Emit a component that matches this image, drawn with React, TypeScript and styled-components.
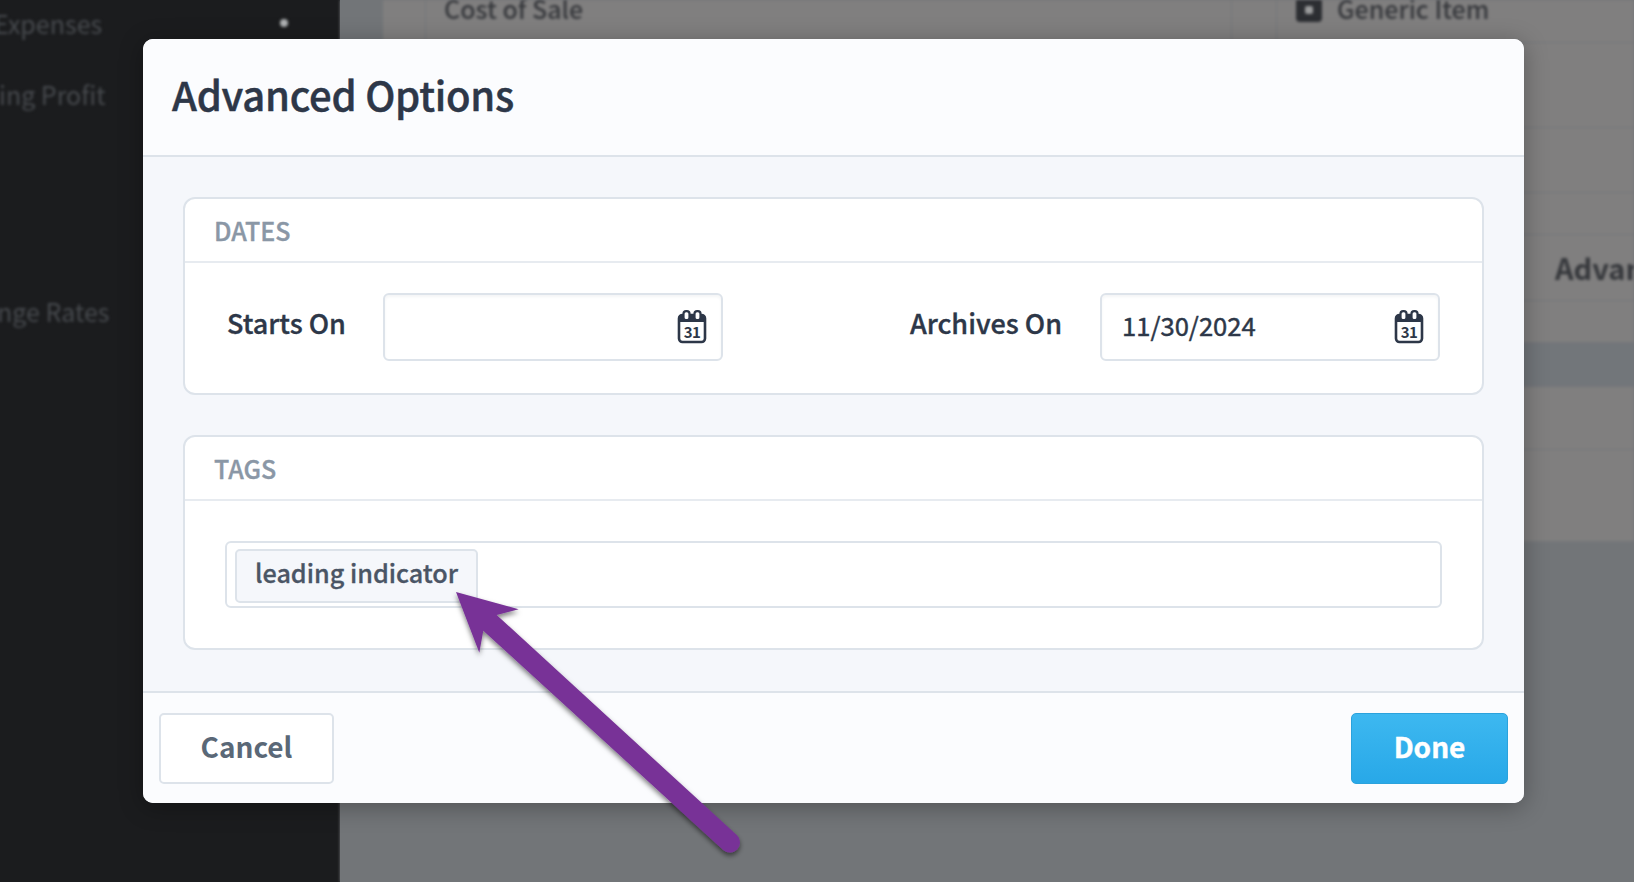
import React from "react";
import styled, { createGlobalStyle } from "styled-components";

const Global = createGlobalStyle`
  html, body { margin: 0; padding: 0; height: 100%; overflow: hidden; }
  body { font-family: "Noto Sans CJK SC", "Noto Sans", sans-serif; background: #727578; }
`;

const Page = styled.div`
  width: 1634px;
  height: 882px;
  position: relative;
  overflow: hidden;
  display: flex;
`;

const Sidebar = styled.aside`
  width: 340px;
  flex: none;
  box-sizing: border-box;
  padding-top: 8px;
  background: #1b1c1e;
  color: #484b4f;
  font-size: 25px;
  line-height: 30px;
  overflow: hidden;
`;

const SideRow = styled.div<{ $gap: number; $shift: number }>`
  display: flex;
  align-items: center;
  margin-top: ${(p) => p.$gap}px;
  margin-left: ${(p) => p.$shift}px;
  padding-right: 52px;
  white-space: nowrap;
  filter: blur(1.4px);
`;

const SideDot = styled.i`
  width: 8px;
  height: 8px;
  margin-left: auto;
  border-radius: 50%;
  background: #b0b2b4;
`;

const Main = styled.main`
  flex: 1;
  display: flex;
  min-width: 0;
  background: #727578;
  filter: blur(1.4px);
`;

const Strip = styled.div`
  width: 43px;
  flex: none;
`;

const Table = styled.div`
  flex: 1;
  min-width: 0;
  height: 542px;
  display: flex;
  flex-direction: column;
  background: #807f7f;
  overflow: hidden;
`;

const Row = styled.div<{ $h: number; $band?: boolean }>`
  height: ${(p) => p.$h}px;
  flex: none;
  box-sizing: border-box;
  display: flex;
  align-items: stretch;
  border-bottom: 1px solid #74767a;
  background: ${(p) => (p.$band ? "#72767a" : "transparent")};
  color: #35373b;
  white-space: nowrap;
`;

const Cell = styled.div<{ $w?: number; $pad?: number; $line?: boolean }>`
  ${(p) => (p.$w ? `width: ${p.$w}px; flex: none;` : "flex: 1;")}
  box-sizing: border-box;
  display: flex;
  align-items: flex-start;
  gap: 15px;
  padding-left: ${(p) => p.$pad ?? 0}px;
  border-left: ${(p) => (p.$line ? "1px solid #74767a" : "none")};
  font-size: 25px;
  font-weight: 500;
  line-height: 30px;
`;

const TopText = styled.span`
  margin-top: -7px;
`;

const AdvancedText = styled.div`
  padding: 14px 0 0 1172px;
  font-size: 29px;
  line-height: 36px;
  font-weight: 700;
`;

const ItemIcon = styled.i`
  width: 26px;
  height: 24px;
  margin-top: -2px;
  border-radius: 4px;
  background: #2c2e32;
  display: flex;
  align-items: center;
  justify-content: center;
  &::after {
    content: "";
    width: 8px;
    height: 8px;
    border-radius: 2px;
    background: #9a9b9c;
  }
`;

const Modal = styled.div`
  position: absolute;
  left: 143px;
  top: 39px;
  width: 1381px;
  height: 764px;
  border-radius: 10px;
  background: #f5f7fb;
  box-shadow: 0 4px 24px rgba(0, 0, 0, 0.3);
  display: flex;
  flex-direction: column;
  overflow: hidden;
  color: #2d3748;
`;

const Header = styled.header`
  height: 118px;
  flex: none;
  box-sizing: border-box;
  background: #fbfcfe;
  border-bottom: 2px solid #dde3ea;
  display: flex;
  align-items: center;
  padding: 0 0 6px 29px;
  font-size: 40px;
  font-weight: 500;
  letter-spacing: -0.25px;
  -webkit-text-stroke: 0.45px #2d3748;
`;

const Body = styled.div`
  flex: 1;
  display: flex;
  flex-direction: column;
  gap: 40px;
  padding: 40px 40px 0;
`;

const Panel = styled.section<{ $h: number }>`
  height: ${(p) => p.$h}px;
  box-sizing: border-box;
  background: #fff;
  border: 2px solid #dde3ea;
  border-radius: 12px;
`;

const PanelTitle = styled.div`
  height: 64px;
  box-sizing: border-box;
  border-bottom: 2px solid #e7ebf0;
  padding: 0 0 0 29px;
  display: flex;
  align-items: center;
  font-size: 25px;
  font-weight: 500;
  color: #8a97a6;
  -webkit-text-stroke: 0.35px #8a97a6;
`;

const DateRow = styled.div`
  display: flex;
  align-items: center;
  padding: 30px 41px 0 41px;
`;

const DateLabel = styled.label<{ $w: number; $end?: boolean }>`
  width: ${(p) => p.$w}px;
  flex: none;
  box-sizing: border-box;
  padding: ${(p) => (p.$end ? "0 39px 9px 0" : "0 0 9px 1px")};
  text-align: ${(p) => (p.$end ? "right" : "left")};
  font-size: 27px;
  font-weight: 500;
  -webkit-text-stroke: 0.35px #2d3748;
`;

const DateInput = styled.div`
  width: 340px;
  height: 68px;
  box-sizing: border-box;
  flex: none;
  margin-left: -1px;
  border: 2px solid #dde3ea;
  border-radius: 6px;
  background: #fff;
  box-shadow: inset 0 2px 3px rgba(45, 55, 72, 0.05);
  padding: 0 14px 0 20px;
  display: flex;
  align-items: center;
  justify-content: space-between;
  font-size: 25.6px;
  -webkit-text-stroke: 0.45px #2d3748;
`;

const DateValue = styled.span`
  margin-bottom: 6px;
`;

const TagField = styled.div`
  margin: 40px 40px 0;
  height: 67px;
  box-sizing: border-box;
  border: 2px solid #dde3ea;
  border-radius: 6px;
  padding: 6px 8px;
`;

const Tag = styled.span`
  display: inline-flex;
  align-items: center;
  height: 54px;
  box-sizing: border-box;
  padding: 0 18px 9px;
  border: 2px solid #dde3ea;
  border-radius: 5px;
  background: #f5f7fb;
  color: #4a5565;
  font-size: 25.2px;
  font-weight: 500;
  -webkit-text-stroke: 0.3px #4a5565;
`;

const Footer = styled.footer`
  height: 112px;
  flex: none;
  box-sizing: border-box;
  background: #fbfcfe;
  border-top: 2px solid #dde3ea;
  padding: 20px 16px 0;
  display: flex;
  justify-content: space-between;
  align-items: flex-start;
`;

const Button = styled.button`
  height: 71px;
  box-sizing: border-box;
  font-family: inherit;
  font-size: 28px;
  font-weight: 700;
  border-radius: 5px;
  padding: 0 0 5px;
`;

const CancelButton = styled(Button)`
  width: 175px;
  background: #fff;
  border: 2px solid #dde3ea;
  color: #5a6877;
`;

const DoneButton = styled(Button)`
  width: 157px;
  background: linear-gradient(#3db8f0, #28a8e8);
  border: 1px solid #2ba2dc;
  color: #fff;
  -webkit-text-stroke: 0.4px #fff;
`;

const Arrow = styled.svg`
  position: absolute;
  left: 0;
  top: 0;
  width: 1634px;
  height: 882px;
  pointer-events: none;
`;

const Calendar = () => (
  <svg width="30" height="34" viewBox="0 0 30 34" fill="none">
    <rect x="2" y="5" width="26" height="27" rx="3.5" stroke="#2d3748" strokeWidth="2.6" />
    <path d="M2 5h26v7H2z" fill="#2d3748" />
    <rect x="6.5" y="1.2" width="6" height="9" rx="2.6" fill="#fff" stroke="#2d3748" strokeWidth="2.2" />
    <rect x="17.5" y="1.2" width="6" height="9" rx="2.6" fill="#fff" stroke="#2d3748" strokeWidth="2.2" />
    <text x="15" y="27.5" textAnchor="middle" fontSize="15" fontWeight="700" letterSpacing="-0.5" fill="#2d3748" stroke="none" fontFamily="'Noto Sans CJK SC', sans-serif">31</text>
  </svg>
);

export default function App() {
  return (
    <Page>
      <Global />
      <Sidebar>
        <SideRow $gap={0} $shift={-6}>Expenses<SideDot /></SideRow>
        <SideRow $gap={41} $shift={-1}>ing Profit</SideRow>
        <SideRow $gap={187} $shift={-3}>nge Rates</SideRow>
      </Sidebar>
      <Main>
        <Strip />
        <Table>
          <Row $h={43}>
            <Cell $w={42} />
            <Cell $w={806} $pad={18} $line><TopText>Cost of Sale</TopText></Cell>
            <Cell $w={45} $line />
            <Cell $pad={19} $line>
              <ItemIcon />
              <TopText>Generic Item</TopText>
            </Cell>
          </Row>
          <Row $h={85} />
          <Row $h={65} />
          <Row $h={42} />
          <Row $h={66}><AdvancedText>Advanced</AdvancedText></Row>
          <Row $h={42} />
          <Row $h={44} $band />
          <Row $h={63} />
          <Row $h={92} />
        </Table>
      </Main>
      <Modal>
        <Header>Advanced Options</Header>
        <Body>
          <Panel $h={198}>
            <PanelTitle>DATES</PanelTitle>
            <DateRow>
              <DateLabel $w={158}>Starts On</DateLabel>
              <DateInput><span /><Calendar /></DateInput>
              <DateLabel $w={378} $end>Archives On</DateLabel>
              <DateInput><DateValue>11/30/2024</DateValue><Calendar /></DateInput>
            </DateRow>
          </Panel>
          <Panel $h={215}>
            <PanelTitle>TAGS</PanelTitle>
            <TagField><Tag>leading indicator</Tag></TagField>
          </Panel>
        </Body>
        <Footer>
          <CancelButton>Cancel</CancelButton>
          <DoneButton>Done</DoneButton>
        </Footer>
      </Modal>
      <Arrow viewBox="0 0 1634 882">
        <defs>
          <filter id="arrowShadow" x="-20%" y="-20%" width="140%" height="140%">
            <feDropShadow dx="0" dy="3" stdDeviation="2.5" floodColor="#000" floodOpacity="0.5" />
          </filter>
        </defs>
        <g filter="url(#arrowShadow)" fill="#783397">
          <path d="M456 592 L518.7 609.3 L496.7 615 L736.8 835.1 A10 10 0 0 1 723.2 849.9 L483.3 630.7 L479.3 652.7 Z" />
        </g>
      </Arrow>
    </Page>
  );
}
